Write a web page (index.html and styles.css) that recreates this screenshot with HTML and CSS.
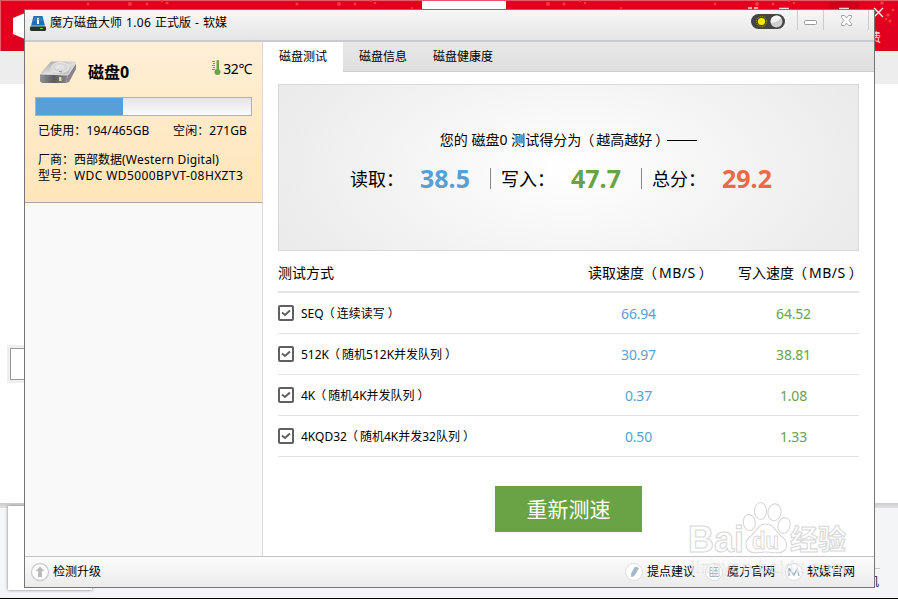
FILE: index.html
```html
<!DOCTYPE html>
<html lang="zh-CN">
<head>
    <meta charset="UTF-8">
    <meta name="viewport" content="width=device-width, initial-scale=1.0">
    <title>魔方磁盘大师</title>
    <link rel="stylesheet" href="styles.css">
</head>
<body>
<div class="desktop">
    <!-- windows behind the main one -->
    <svg class="backdrop" width="898" height="599" viewBox="0 0 898 599">
        <defs>
            <linearGradient id="band" x1="0" y1="0" x2="0" y2="1"><stop offset="0" stop-color="#cdcdcd"/><stop offset="1" stop-color="#e0e0e0"/></linearGradient>
        </defs>
        <rect width="898" height="51" fill="#e1001e"/>
        <rect x="829" width="30" height="10" fill="#cc001b"/>
        <path d="M0 .5H898M.5 0V51" stroke="#ee5566"/>
        <g fill="#fa3a3c">
            <circle cx="88" cy="4" r="1.5"/><circle cx="130" cy="4" r="2"/><circle cx="147" cy="4" r="1.5"/><circle cx="162" cy="1" r="1.2"/><circle cx="167" cy="3" r="1.5"/>
            <circle cx="297" cy="4" r="1.5"/><circle cx="339" cy="4" r="2"/><circle cx="355" cy="4" r="1.5"/><circle cx="371" cy="1" r="1.3"/><circle cx="375" cy="3" r="1.3"/><circle cx="412" cy="8" r="1"/>
            <circle cx="548" cy="4" r="2"/><circle cx="564" cy="4" r="1.6"/><circle cx="580" cy="1" r="1.3"/><circle cx="585" cy="3" r="1.3"/><circle cx="621" cy="8" r="1"/>
            <circle cx="715" cy="4" r="1.4"/><circle cx="757" cy="4" r="2"/><circle cx="773" cy="4" r="1.6"/><circle cx="789" cy="1" r="1.3"/><circle cx="794" cy="3" r="1.3"/>
            <circle cx="882" cy="3" r="1.8"/><circle cx="888" cy="15" r="1.8"/><circle cx="893" cy="10" r="1.5"/><circle cx="886" cy="19" r="1.2"/><circle cx="890" cy="21" r="1.6"/>
        </g>
        <path d="M748 8h4m2 0h4M779 8.5h10M839 8.5h10" stroke="#ffd9dd" stroke-width="1.5"/>
        <path d="M874 8l9 9m0-9l-9 9" stroke="#fff" stroke-width="1.3"/>
        <rect x="422" y="1" width="84" height="9" fill="#fff"/>
        <path d="M13 18l12-5v26l-12-5z" fill="#fff"/>
        <text x="869" y="42" font-size="12" fill="#ffd5d5">费</text>
        <rect y="51" width="898" height="33" fill="#ededed"/>
        <rect x="7" y="345" width="30" height="38" fill="#efefef"/>
        <rect x="10.500" y="348.500" width="30" height="31" fill="#fff" stroke="#999"/>
        <rect y="503" width="898" height="5" fill="url(#band)"/>
        <rect y="508" width="898" height="90" fill="#f4f5f7"/>
        <path d="M870 568.500h10" stroke="#c8c8c8"/>
        <text x="867" y="586" font-size="12" fill="#223">机</text>
        <rect y="598" width="898" height="1" fill="#000"/>
    </svg>
    <div class="popup"></div>

    <div class="window">
        <header class="titlebar">
            <svg class="app-icon" width="16" height="16" viewBox="0 0 16 16">
                <path d="M3.500 0h9L15 10H1z" fill="#1673b5"/>
                <path d="M4 1h8l1 4H3z" fill="#2680bf"/>
                <rect x="7" y="2" width="2" height="1.500" fill="#fff"/><rect x="7" y="4" width="2" height="4" fill="#fff"/>
                <rect y="10" width="16" height="5" rx="1.500" fill="#26332f"/>
                <path d="M1 10h14" stroke="#b4c5ce"/>
                <rect x="10" y="12" width="3" height="1" fill="#72d442"/>
            </svg>
            <h1>魔方磁盘大师 <span class="version">1.06</span> 正式版 - 软媒</h1>
            <div class="window-controls">
                <svg class="toggle" width="34" height="15" viewBox="0 0 34 15">
                    <rect width="34" height="15" rx="7.500" fill="#444"/>
                    <circle cx="10.500" cy="7.500" r="5.200" fill="none" stroke="#b2a414" stroke-width="1" stroke-dasharray="1 1.040"/>
                    <circle cx="10.500" cy="7.500" r="3.600" fill="#ffe516"/>
                    <circle cx="25.500" cy="7.500" r="6" fill="#cfcfcf"/>
                    <path d="M20 9a5.800 5.800 0 0 1 10-5.300Q27 8 20 9" fill="#f6f6f6"/>
                </svg>
                <div class="control minimize">
                    <svg width="13" height="6" viewBox="0 0 13 6"><rect x=".5" y=".5" width="12" height="4" rx="1" fill="#fff" stroke="#999"/></svg>
                </div>
                <div class="control close">
                    <svg width="11" height="11" viewBox="0 0 11 11"><path d="M.5.500h3l2 2.500 2-2.500h3v2L8 5.500l2.500 3v2h-3l-2-2.500-2 2.500h-3v-2l2.500-3-2.500-3z" fill="#fff" stroke="#999" stroke-width=".9"/></svg>
                </div>
            </div>
        </header>

        <div class="content">
            <aside class="sidebar">
                <section class="disk-card">
                    <div class="disk-head">
                        <svg width="38" height="24" viewBox="0 0 38 24">
                            <defs>
                                <linearGradient id="diskTop" x1="0" y1="0" x2="1" y2="1"><stop offset="0" stop-color="#999"/><stop offset=".55" stop-color="#dedede"/><stop offset="1" stop-color="#aaa"/></linearGradient>
                                <linearGradient id="diskFront" x1="0" y1="0" x2="1" y2="0"><stop offset="0" stop-color="#919196"/><stop offset=".5" stop-color="#5b5b62"/><stop offset="1" stop-color="#89898f"/></linearGradient>
                            </defs>
                            <path d="M12 1.500h24l1 1.500-8 12L1 14z" fill="url(#diskTop)"/>
                            <path d="M1 14l28 1-2 8H3l-2-1.500z" fill="url(#diskFront)"/>
                            <path d="M29 15l8-12v6l-7 13-3 1z" fill="#85858b"/>
                            <ellipse cx="21" cy="7.500" rx="8.500" ry="5" fill="#d6d6d6" stroke="#f0f0f0" stroke-width=".8"/>
                            <ellipse cx="21" cy="7" rx="5" ry="2.500" fill="#e3e3e3"/>
                            <path d="M20 11.500l3 .500" stroke="#888"/>
                            <path d="M1 14l28 1 8-12" fill="none" stroke="#eee" stroke-width=".8"/>
                            <rect x="20" y="17" width="2.500" height="4" fill="#d9d29a"/>
                        </svg>
                        <h2>磁盘0</h2>
                        <svg class="thermometer" width="9" height="16" viewBox="0 0 9 16">
                            <path d="M0 1.500h3M1 3.500h2M0 5.500h3M1 7.500h2M0 9.500h3" stroke="#6aa546"/>
                            <rect x="4.500" y="0" width="2.500" height="12" rx="1" fill="#6aa546"/><circle cx="5.500" cy="12" r="3" fill="#6aa546"/>
                        </svg>
                        <span class="temperature">32℃</span>
                    </div>
                    <div class="usage"><div class="usage-fill" style="width: 87px"></div></div>
                    <div class="usage-text"><span>已使用<i class="colon">：</i>194/465GB</span><span>空闲<i class="colon">：</i>271GB</span></div>
                    <p class="vendor">厂商<i class="colon">：</i>西部数据<span class="maker">(Western Digital)</span><br>型号<i class="colon">：</i><span class="model">WDC WD5000BPVT-08HXZT3</span></p>
                </section>
            </aside>

            <main class="main">
                <nav class="tabs">
                    <a class="tab active">磁盘测试</a>
                    <a class="tab">磁盘信息</a>
                    <a class="tab">磁盘健康度</a>
                </nav>
                <section class="score-panel">
                    <p class="score-title">您的 磁盘0 测试得分为<span class="open">（</span>越高越好<span class="shut">）</span><span class="dash"></span></p>
                    <div class="scores">
                        <div class="score"><span>读取<i class="colon">：</i></span><strong class="blue">38.5</strong></div>
                        <div class="score"><span>写入<i class="colon">：</i></span><strong class="green">47.7</strong></div>
                        <div class="score"><span>总分<i class="colon">：</i></span><strong class="orange">29.2</strong></div>
                    </div>
                </section>
                <section class="results">
                    <div class="row head"><span>测试方式</span><span>读取速度<i class="open">（</i><i class="unit">MB/S</i><i class="shut">）</i></span><span>写入速度<i class="open">（</i><i class="unit">MB/S</i><i class="shut">）</i></span></div>
                    <div class="row">
                        <span class="mode"><svg class="check" viewBox="0 0 16 16"><rect x="1" y="1" width="14" height="14" rx="1"/><path d="M4 7.500l3 2.500 5-4.500"/></svg><span>SEQ<i class="open">（</i>连续读写<i class="shut">）</i></span></span>
                        <span class="value blue">66.94</span><span class="value green">64.52</span>
                    </div>
                    <div class="row">
                        <span class="mode"><svg class="check" viewBox="0 0 16 16"><rect x="1" y="1" width="14" height="14" rx="1"/><path d="M4 7.500l3 2.500 5-4.500"/></svg><span>512K<i class="open">（</i>随机512K并发队列<i class="shut">）</i></span></span>
                        <span class="value blue">30.97</span><span class="value green">38.81</span>
                    </div>
                    <div class="row">
                        <span class="mode"><svg class="check" viewBox="0 0 16 16"><rect x="1" y="1" width="14" height="14" rx="1"/><path d="M4 7.500l3 2.500 5-4.500"/></svg><span>4K<i class="open">（</i>随机4K并发队列<i class="shut">）</i></span></span>
                        <span class="value blue">0.37</span><span class="value green">1.08</span>
                    </div>
                    <div class="row">
                        <span class="mode"><svg class="check" viewBox="0 0 16 16"><rect x="1" y="1" width="14" height="14" rx="1"/><path d="M4 7.500l3 2.500 5-4.500"/></svg><span>4KQD32<i class="open">（</i>随机4K并发32队列<i class="shut">）</i></span></span>
                        <span class="value blue">0.50</span><span class="value green">1.33</span>
                    </div>
                </section>
                <button class="retest">重新测速</button>
            </main>
        </div>

        <footer class="footer">
            <a class="update">
                <svg width="20" height="20" viewBox="0 0 20 20"><circle cx="10" cy="10" r="8.500" fill="#fff" stroke="#ccc" stroke-width="1.300"/><path d="M10 4.500l4.500 4.500H12v6H8V9H5.500z" fill="#bbb"/></svg>
                检测升级
            </a>
            <div class="links">
                <a>
                    <svg width="20" height="20" viewBox="0 0 20 20"><circle cx="10" cy="10" r="8.500" fill="#fff" stroke="#ddd"/><path d="M11 4.500l4 1.500-4 7-3.500 2.500-.5-4z" fill="#a3b7c6"/></svg>
                    提点建议
                </a>
                <a>
                    <svg width="20" height="20" viewBox="0 0 20 20"><circle cx="10" cy="10" r="8.500" fill="#fff" stroke="#ddd"/><path d="M6 5.500h9v9H6zM6 8.500h9M6 11.500h9M9 5.500v9M12 5.500v9" fill="none" stroke="#a3b7c6"/></svg>
                    魔方官网
                </a>
                <a>
                    <svg width="20" height="20" viewBox="0 0 20 20"><circle cx="10" cy="10" r="8.500" fill="#fff" stroke="#ddd"/><path d="M5 6v8M5 6l5 7 3-6 2 7" fill="none" stroke="#a3b7c6" stroke-width="1.500"/></svg>
                    软媒官网
                </a>
            </div>
        </footer>
    </div>

    <svg class="watermark" width="162" height="80" viewBox="687 500 162 80">
        <g fill="#fff" fill-opacity=".9" stroke="#d8d8d8" stroke-width="1.100">
            <text class="brand" x="688" y="552" font-size="37" textLength="56" lengthAdjust="spacingAndGlyphs">Bai</text>
            <ellipse cx="749.300" cy="522.500" rx="6" ry="8" transform="rotate(-8 749.300 522.500)"/>
            <ellipse cx="760.500" cy="511" rx="6" ry="8.500"/>
            <ellipse cx="774.500" cy="512.300" rx="6.500" ry="8.500" transform="rotate(8 774.500 512.300)"/>
            <ellipse cx="784" cy="525.500" rx="6" ry="8" transform="rotate(15 784 525.500)"/>
            <path d="M766 524c8 0 9 7 15 12 6 4 7 10 4 14-5 5-12 2-19 2s-13 3-18-2c-3-4-3-10 3-14 6-5 7-12 15-12z"/>
            <text class="brand" x="752" y="549" font-size="23" textLength="27" lengthAdjust="spacingAndGlyphs" stroke-width=".9">du</text>
            <text class="brand" x="790" y="550" font-size="28">经验</text>
        </g>
        <text class="brand-url" x="691" y="573" font-size="17" textLength="155" fill="#fff" fill-opacity=".7" stroke="#d2d2d2" stroke-width=".3">jingyan.baidu.com</text>
    </svg>
</div>
</body>
</html>
```
FILE: styles.css
```css
* {
    box-sizing: border-box;
}
body {
    margin: 0;
    font-family: "Noto Sans", "Noto Sans CJK SC", sans-serif;
    font-size: 12px;
    line-height: 16px;
    color: #000;
    background: #fff;
}
h1, h2, p {
    margin: 0;
    font-size: 12px;
    font-weight: normal;
}
i {
    font-style: normal;
}
svg {
    display: block;
    flex: none;
}
.desktop {
    position: relative;
    width: 898px;
    height: 599px;
    overflow: hidden;
}
.backdrop {
    position: absolute;
    left: 0;
    top: 0;
}
.popup {
    position: absolute;
    left: 8px;
    top: 506px;
    width: 84px;
    height: 84px;
    background: #fff;
    box-shadow: 0 0 3px #777;
}

/* full-width punctuation */
.colon {
    font-family: "Noto Sans CJK TC", sans-serif;
    line-height: 1;
}
.open {
    margin: 0 2px 0 -1px;
}
.shut {
    margin: 0 -3px 0 3px;
}

/* main window */
.window {
    position: absolute;
    left: 24px;
    top: 9px;
    width: 851px;
    height: 579px;
    display: flex;
    flex-direction: column;
    border: 1px solid #757575;
    background: #fff;
}
.titlebar {
    display: flex;
    height: 32px;
    padding-left: 5px;
    background: linear-gradient(#f7f7f7, #e5e5e5);
    border-bottom: 2px solid #cacbce;
}
.app-icon {
    margin: 6px 4px 0 0;
}
.titlebar h1 {
    padding-top: 5px;
    white-space: nowrap;
    word-spacing: 0.9px;
}
.version {
    letter-spacing: 0.3px;
}
.window-controls {
    display: flex;
    margin-left: auto;
}
.toggle {
    margin: 4px 12px 0 0;
}
.control {
    height: 20px;
    display: flex;
    justify-content: center;
    border-left: 1px solid #ccc;
}
.minimize {
    width: 26px;
    padding-top: 10px;
}
.close {
    width: 46px;
    margin-right: 5px;
    padding-top: 5px;
    border-right: 1px solid #ccc;
}
.content {
    display: flex;
    flex: 1;
    min-height: 0;
}

/* sidebar */
.sidebar {
    width: 238px;
    background: #f9f9f9;
    border-right: 1px solid #d9d9d9;
}
.disk-card {
    height: 161px;
    padding: 16px 10px 0;
    background: linear-gradient(#ffefd6, #ffe5b9);
    border-bottom: 1px solid #a5a5a5;
}
.disk-head {
    display: flex;
    align-items: flex-start;
    height: 39px;
    padding-left: 4px;
}
.disk-head > svg:first-child {
    margin-top: 2px;
}
.disk-head h2 {
    margin: 4px 0 0 11px;
    font-size: 16px;
    font-weight: bold;
    line-height: 20px;
}
.thermometer {
    margin: 2px 2px 0 auto;
}
.temperature {
    font-size: 14px;
    line-height: 22px;
    letter-spacing: -0.4px;
}
.usage {
    height: 19px;
    border: 1px solid #b0b0b0;
    background: linear-gradient(#e4e4e4, #fbfbfb);
}
.usage-fill {
    height: 17px;
    background: #569fd7;
}
.usage-text {
    display: flex;
    justify-content: space-between;
    padding: 7px 5px 0 3px;
    letter-spacing: 0.1px;
}
.vendor {
    padding: 13px 0 0 3px;
    white-space: nowrap;
}
.maker {
    letter-spacing: 0.2px;
}
.model {
    letter-spacing: 0.4px;
}

/* test page */
.main {
    flex: 1;
    display: flex;
    flex-direction: column;
}
.tabs {
    display: flex;
    height: 30px;
    background: linear-gradient(#e8e8e8, #dfdfdf);
    border-bottom: 1px solid #cbcbcb;
}
.tab {
    padding: 7px 10px 0 16px;
}
.tab.active {
    height: 30px;
    padding-right: 16px;
    background: #fff;
}
.score-panel {
    height: 167px;
    margin: 12px 15px 0;
    padding: 46px 0 0;
    border: 1px solid #d9d9d9;
    background: radial-gradient(ellipse 310px 160px at center, #fff, #ebebeb);
}
.score-title {
    display: flex;
    justify-content: center;
    font-size: 14px;
    line-height: 18px;
    white-space: pre;
}
.score-title .shut {
    margin-right: -2px;
}
.dash {
    width: 30px;
    height: 1px;
    margin-top: 9px;
    background: #000;
}
.scores {
    display: flex;
    padding: 14px 0 0 71px;
}
.score {
    display: flex;
    align-items: center;
    width: 151px;
    height: 30px;
    font-size: 18px;
    white-space: nowrap;
}
.score > span {
    width: 70px;
}
.score strong {
    font-size: 25px;
}
.score + .score::before {
    content: "";
    width: 1px;
    height: 21px;
    margin: 0 10px 0 -11px;
    background: #888;
}
.blue {
    color: #569fd7;
}
.green {
    color: #69a345;
}
.orange {
    color: #eb6946;
}
.results {
    margin: 0 15px;
}
.row {
    display: grid;
    grid-template-columns: 283px 155px 143px;
    align-items: center;
    height: 41px;
    border-bottom: 1px solid #e3e3e3;
}
.row.head {
    height: 42px;
    grid-template-columns: 310px 150px 121px;
    padding-top: 4px;
    font-size: 14px;
    white-space: nowrap;
    border-bottom-width: 2px;
}
.unit {
    letter-spacing: 0.5px;
}
.mode {
    display: flex;
    align-items: center;
    white-space: nowrap;
}
.mode > span {
    padding-top: 2px;
}
.check {
    width: 16px;
    height: 16px;
    margin-right: 7px;
    fill: none;
    stroke: #606060;
    stroke-width: 2;
}
.value {
    width: 155px;
    padding-top: 2px;
    text-align: center;
    font-size: 14px;
    letter-spacing: -0.2px;
}
.retest {
    width: 147px;
    height: 46px;
    margin: 29px 0 0 232px;
    padding: 0 0 3px;
    border: none;
    background: #69a345;
    color: #fff;
    font-family: inherit;
    font-size: 21px;
}

/* bottom bar */
.footer {
    display: flex;
    justify-content: space-between;
    height: 31px;
    padding: 0 19px 0 5px;
    border-top: 1px solid #c3c3c3;
    background: linear-gradient(#fcfcfc, #ebebeb);
}
.footer a {
    display: flex;
    align-items: center;
    gap: 3px;
    white-space: nowrap;
}
.links {
    display: flex;
    gap: 9px;
}
.watermark {
    position: absolute;
    left: 687px;
    top: 500px;
}
.brand, .brand-url {
    font-family: "Liberation Sans", "Noto Sans CJK SC", sans-serif;
    font-weight: bold;
}
.brand-url {
    font-weight: normal;
}
```
